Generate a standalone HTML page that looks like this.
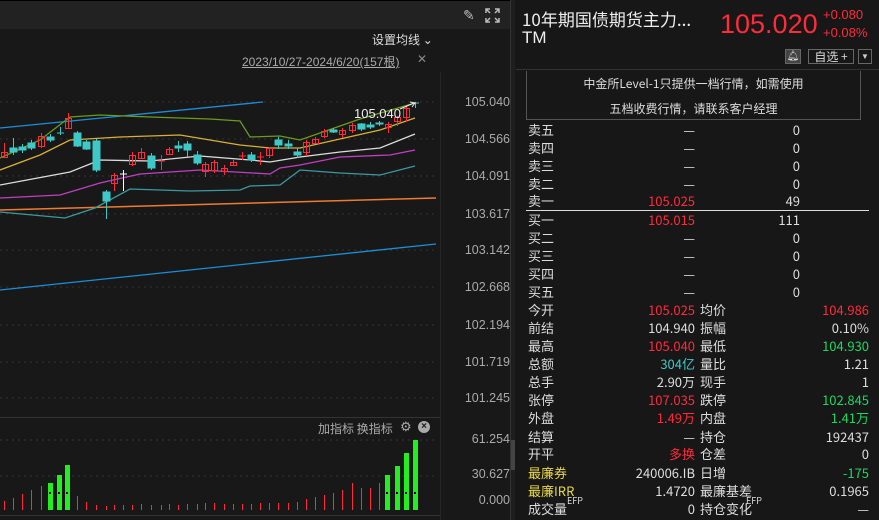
<!DOCTYPE html>
<html><head><meta charset="utf-8"><style>
*{margin:0;padding:0;box-sizing:border-box}
body{width:879px;height:520px;background:#181818;overflow:hidden;position:relative;font-family:"Liberation Sans","Noto Sans CJK SC",sans-serif;color:#ccc}
.a{position:absolute;white-space:nowrap}
.cj{font-family:"Noto Sans CJK SC","Liberation Sans",sans-serif}
.r{color:#ff2a3a}.g{color:#1ed760}.c{color:#3ec8c8}.y{color:#e6d84a}.w{color:#ddd}
.ax{font-size:12.5px;color:#aaa;right:369px;text-align:right;width:60px}
.row{position:absolute;left:528px;font-size:13px;height:18px;line-height:18px;width:342px}
.row span{position:absolute}
.sp{position:absolute;font-size:9px;top:-4px;line-height:10px}
</style></head><body>
<div class="a" style="left:0;top:0;width:510px;height:29px;background:#222;border-top:1px solid #000"></div>
<div class="a" style="left:463px;top:7px;font-size:14px;color:#bbb">&#x270E;</div>
<svg class="a" style="left:485px;top:8px" width="15" height="15" viewBox="0 0 15 15" fill="none" stroke="#bbb" stroke-width="1.5"><path d="M1 5V1h4M1 1l4 4M10 1h4v4M14 1l-4 4M1 10v4h4M1 14l4-4M14 10v4h-4M14 14l-4-4"/></svg>
<div class="a cj" style="left:372px;top:31px;font-size:12px;color:#ddd">设置均线 ⌄</div>
<div class="a" style="left:242px;top:53px;font-size:12px;color:#aaa;text-decoration:underline">2023/10/27-2024/6/20(157根)</div>
<div class="a" style="left:417px;top:52px;font-size:12px;color:#888">&#x2715;</div>
<div class="a" style="left:440px;top:72px;width:1px;height:448px;background:#262626"></div>
<div class="ax a" style="top:95px">105.040</div>
<div class="ax a" style="top:132px">104.566</div>
<div class="ax a" style="top:169px">104.091</div>
<div class="ax a" style="top:207px">103.617</div>
<div class="ax a" style="top:243px">103.142</div>
<div class="ax a" style="top:280px">102.668</div>
<div class="ax a" style="top:318px">102.194</div>
<div class="ax a" style="top:355px">101.719</div>
<div class="ax a" style="top:391px">101.245</div>
<svg class="a" style="left:0;top:0" width="440" height="520">
<g stroke="#333" stroke-dasharray="2 4" stroke-width="1">
<path d="M0 102H436M0 139H436M0 176H436M0 214H436M0 250H436M0 287H436M0 325H436M0 362H436M0 398H436M0 440H436M0 476H436"/></g>
<path d="M0 417.5H510M0 515.5H510" stroke="#333"/>
<path d="M0 128L263 102" stroke="#1a8fd8" stroke-width="1.3"/>
<path d="M0 290L436 244" stroke="#1a8fd8" stroke-width="1.3"/>
<path d="M0 210L436 198" stroke="#f07a30" stroke-width="1.5"/>
<g fill="none" stroke-width="1.3">
<path stroke="#6a9a1e" d="M0 158L40 140L70 117L100 115L150 117L210 119L240 121L250 137L280 136L300 140L340 126L360 119L415 103"/>
<path stroke="#d8b038" d="M0 170L40 155L70 140L120 137L180 135L240 145L270 148L300 148L340 139L380 130L415 118"/>
<path stroke="#ddd" d="M0 185L70 172L100 160L150 161L200 156L250 160L270 162L300 157L340 152L380 148L415 134"/>
<path stroke="#c040c0" d="M0 198L60 195L100 183L140 174L200 170L270 174L280 168L300 165L340 157L390 155L415 150"/>
<path stroke="#3a9aa0" d="M0 212L65 218L95 208L130 189L190 191L240 190L250 186L280 185L300 170L340 173L380 175L415 166"/>
</g>
<g stroke-width="1">
<g stroke="#ff2a3a" fill="none">
<path d="M4.5 143V158M41.5 133V148M68.5 113V128M114.5 173V191M132.5 152V166M141.5 148V158M161.5 155V170M169.5 147V155M205.5 162V177M214.5 160V173M224.5 165V175M233.5 160V166M242.5 152V160M260.5 152V165M269.5 147V158M306.5 140V156M315.5 137V143M324.5 129V138M342.5 128V138M352.5 123V133M388.5 122V133M397.5 116V126M406.5 106V122"/>
<rect x="1.5" y="152.5" width="6" height="5"/><rect x="38.5" y="136.5" width="6" height="10"/><rect x="65.5" y="118.5" width="6" height="10"/><rect x="111.5" y="175.5" width="6" height="8"/><rect x="129.5" y="155.5" width="6" height="9"/><rect x="138.5" y="152.5" width="6" height="6"/><rect x="166.5" y="149.5" width="6" height="5"/><rect x="202.5" y="164.5" width="6" height="7"/><rect x="211.5" y="162.5" width="6" height="8"/><rect x="221.5" y="168.5" width="6" height="3"/><rect x="230.5" y="162.5" width="6" height="3"/><rect x="266.5" y="148.5" width="6" height="7"/><rect x="303.5" y="142.5" width="6" height="10"/><rect x="312.5" y="139.5" width="6" height="4"/><rect x="321.5" y="131.5" width="6" height="5"/><rect x="339.5" y="130.5" width="6" height="4"/><rect x="349.5" y="125.5" width="6" height="5"/><rect x="385.5" y="124.5" width="6" height="3"/><rect x="394.5" y="117.5" width="6" height="4"/><rect x="403.5" y="108.5" width="6" height="9"/>
<path d="M158 161H165M239 156H246M257 157H264"/>
</g>
<g stroke="#3ec8c8" fill="#3ec8c8">
<path d="M13.5 138V155M22.5 144V153M31.5 140V150M50.5 134V142M77.5 131V147M86.5 140V150M96.5 139V172M106.5 190V219M151.5 153V170M178.5 141V152M187.5 141V157M197.5 151V165M251.5 152V162M278.5 137V149M288.5 140V149M297.5 148V158M333.5 128V133M361.5 123V131M370.5 122V129M379.5 121V126M415.5 102V108"/>
<rect x="10" y="148" width="7" height="4"/><rect x="19" y="147" width="7" height="3"/><rect x="28" y="143" width="7" height="5"/><rect x="47" y="137" width="7" height="3"/><rect x="74" y="133" width="7" height="13"/><rect x="83" y="142" width="7" height="7"/><rect x="93" y="141" width="7" height="29"/><rect x="103" y="192" width="7" height="9"/><rect x="148" y="156" width="7" height="12"/><rect x="175" y="146" width="7" height="2"/><rect x="184" y="144" width="7" height="6"/><rect x="194" y="155" width="7" height="8"/><rect x="248" y="155" width="7" height="5"/><rect x="275" y="140" width="7" height="5"/><rect x="285" y="144" width="7" height="2"/><rect x="294" y="152" width="7" height="3"/><rect x="330" y="130" width="7" height="2"/><rect x="358" y="124" width="7" height="5"/><rect x="367" y="125" width="7" height="2"/><rect x="376" y="123" width="7" height="1"/>
<path d="M412 103H419M57 133H64"/>
</g>
<path d="M123.5 170V191M120 174H127" stroke="#fff"/>
<path d="M60.5 127V135" stroke="#3ec8c8"/>
</g>
<text x="354" y="118" font-family="Liberation Sans" font-size="13" fill="#eee">105.040</text>
<path d="M400 109L414 103M410 102L415 103L412 107" stroke="#eee" fill="none"/>
<g stroke="#ff2a3a" stroke-width="1"><path d="M4.5 510V501M13.5 510V498M22.5 510V494M31.5 510V490M41.5 510V486M77.5 510V496M86.5 510V502M96.5 510V505M106.5 510V506M114.5 510V505M123.5 510V505M132.5 510V505M141.5 510V504M151.5 510V505M161.5 510V505M169.5 510V504M178.5 510V505M187.5 510V504M197.5 510V504M205.5 510V503M214.5 510V503M224.5 510V504M233.5 510V504M242.5 510V504M251.5 510V504M260.5 510V503M269.5 510V503M278.5 510V503M288.5 510V503M297.5 510V502M306.5 510V499M315.5 510V497M324.5 510V495M333.5 510V493M342.5 510V490M352.5 510V483M361.5 510V488M370.5 510V488M379.5 510V483"/></g>
<g fill="#22ee22"><rect x="48" y="483" width="5" height="27"/><rect x="57" y="475" width="5" height="35"/><rect x="65" y="465" width="5" height="45"/><rect x="385" y="475" width="5" height="35"/><rect x="395" y="466" width="5" height="44"/><rect x="404" y="453" width="5" height="57"/><rect x="413" y="440" width="5" height="70"/></g>
<g fill="#000"><rect x="49" y="492" width="2" height="2"/><rect x="58" y="492" width="2" height="2"/><rect x="66" y="492" width="2" height="2"/><rect x="386" y="492" width="2" height="2"/><rect x="396" y="492" width="2" height="2"/><rect x="405" y="492" width="2" height="2"/><rect x="414" y="492" width="2" height="2"/></g>
</svg>
<div class="a cj" style="left:318px;top:420px;font-size:12px;color:#aaa">加指标 换指标</div>
<div class="a" style="left:400px;top:419px;font-size:13px;color:#aaa">&#x2699;</div>
<div class="a" style="left:418px;top:421px;width:12px;height:12px;border-radius:6px;background:#aaa;color:#181818;font-size:10px;line-height:12px;text-align:center;font-weight:bold">×</div>
<div class="ax a" style="top:432px">61.254</div>
<div class="ax a" style="top:467px">30.627</div>
<div class="ax a" style="top:493px">0.000</div>
<div class="a" style="left:510px;top:0;width:6px;height:520px;background:#1e1e1e;border-left:1px solid #333;border-right:1px solid #333"></div>
<div class="a" style="left:511px;top:440px;width:4px;height:30px;background:#444"></div>
<div class="a" style="left:515px;top:0;width:364px;height:520px;background:#171717"></div>
<div class="a" style="left:516px;top:69px;width:363px;height:1px;background:#333"></div>
<div class="a cj" style="left:522px;top:6px;font-size:17px;color:#eee">10年期国债期货主力...</div>
<div class="a" style="left:522px;top:28px;font-size:17px;color:#eee">TM</div>
<div class="a r" style="left:720px;top:9px;font-size:27px">105.020</div>
<div class="a r" style="left:823px;top:7px;font-size:13px">+0.080</div>
<div class="a r" style="left:823px;top:25px;font-size:13px">+0.08%</div>
<div class="a" style="left:785px;top:49px;width:16px;height:15px;background:#444;border:1px solid #666;color:#ddd;font-size:10px;text-align:center;line-height:13px">&#x1F514;&#xFE0E;</div>
<div class="a cj" style="left:808px;top:49px;width:46px;height:15px;border:1px solid #666;font-size:12px;line-height:13px;color:#ddd;text-align:center">自选 +</div>
<div class="a" style="left:858px;top:49px;width:14px;height:15px;border:1px solid #666;font-size:8px;line-height:13px;color:#ccc;text-align:center">▼</div>
<div class="a cj" style="left:526px;top:71px;width:335px;height:49px;border:1px solid #555;border-top:none;text-align:center;font-size:12px;color:#ddd;line-height:25px">中金所Level-1只提供一档行情，如需使用<br>五档收费行情，请联系客户经理</div>
<div class="a" style="left:526px;top:210px;width:343px;height:1px;background:#ddd"></div>
<div class="row cj" style="top:121px"><span class="w">卖五</span><span class="w" style="right:175px">—</span><span class="w" style="right:70px">0</span></div>
<div class="row cj" style="top:139px"><span class="w">卖四</span><span class="w" style="right:175px">—</span><span class="w" style="right:70px">0</span></div>
<div class="row cj" style="top:157px"><span class="w">卖三</span><span class="w" style="right:175px">—</span><span class="w" style="right:70px">0</span></div>
<div class="row cj" style="top:175px"><span class="w">卖二</span><span class="w" style="right:175px">—</span><span class="w" style="right:70px">0</span></div>
<div class="row cj" style="top:192px"><span class="w">卖一</span><span class="r" style="right:175px">105.025</span><span class="w" style="right:70px">49</span></div>
<div class="row cj" style="top:211px"><span class="w">买一</span><span class="r" style="right:175px">105.015</span><span class="w" style="right:70px">111</span></div>
<div class="row cj" style="top:229px"><span class="w">买二</span><span class="w" style="right:175px">—</span><span class="w" style="right:70px">0</span></div>
<div class="row cj" style="top:247px"><span class="w">买三</span><span class="w" style="right:175px">—</span><span class="w" style="right:70px">0</span></div>
<div class="row cj" style="top:265px"><span class="w">买四</span><span class="w" style="right:175px">—</span><span class="w" style="right:70px">0</span></div>
<div class="row cj" style="top:283px"><span class="w">买五</span><span class="w" style="right:175px">—</span><span class="w" style="right:70px">0</span></div>
<div class="row cj" style="top:301px"><span class="w">今开</span><span class="r" style="right:175px">105.025</span><span class="w" style="left:172px">均价</span><span class="r" style="right:1px">104.986</span></div>
<div class="row cj" style="top:319px"><span class="w">前结</span><span class="w" style="right:175px">104.940</span><span class="w" style="left:172px">振幅</span><span class="w" style="right:1px">0.10%</span></div>
<div class="row cj" style="top:337px"><span class="w">最高</span><span class="r" style="right:175px">105.040</span><span class="w" style="left:172px">最低</span><span class="g" style="right:1px">104.930</span></div>
<div class="row cj" style="top:355px"><span class="w">总额</span><span class="c" style="right:175px">304亿</span><span class="w" style="left:172px">量比</span><span class="w" style="right:1px">1.21</span></div>
<div class="row cj" style="top:373px"><span class="w">总手</span><span class="w" style="right:175px">2.90万</span><span class="w" style="left:172px">现手</span><span class="w" style="right:1px">1</span></div>
<div class="row cj" style="top:391px"><span class="w">张停</span><span class="r" style="right:175px">107.035</span><span class="w" style="left:172px">跌停</span><span class="g" style="right:1px">102.845</span></div>
<div class="row cj" style="top:409px"><span class="w">外盘</span><span class="r" style="right:175px">1.49万</span><span class="w" style="left:172px">内盘</span><span class="g" style="right:1px">1.41万</span></div>
<div class="row cj" style="top:428px"><span class="w">结算</span><span class="w" style="right:175px">—</span><span class="w" style="left:172px">持仓</span><span class="w" style="right:1px">192437</span></div>
<div class="row cj" style="top:445px"><span class="w">开平</span><span class="r" style="right:175px">多换</span><span class="w" style="left:172px">仓差</span><span class="w" style="right:1px">0</span></div>
<div class="row cj" style="top:464px"><span class="y">最廉券</span><span class="w" style="right:175px">240006.IB</span><span class="w" style="left:172px">日增</span><span class="g" style="right:1px">-175</span></div>
<div class="row cj" style="top:482px"><span class="y">最廉IRR</span><span class="w" style="right:175px">1.4720</span><span class="w" style="left:172px">最廉基差</span><span class="w" style="right:1px">0.1965</span></div>
<div class="row cj" style="top:500px"><span class="w">成交量<i class="sp" style="left:39px;font-style:normal">EFP</i></span><span class="w" style="right:175px">0</span><span class="w" style="left:172px">持仓变化<i class="sp" style="left:46px;font-style:normal">EFP</i></span><span class="w" style="right:1px">—</span></div>
</body></html>
